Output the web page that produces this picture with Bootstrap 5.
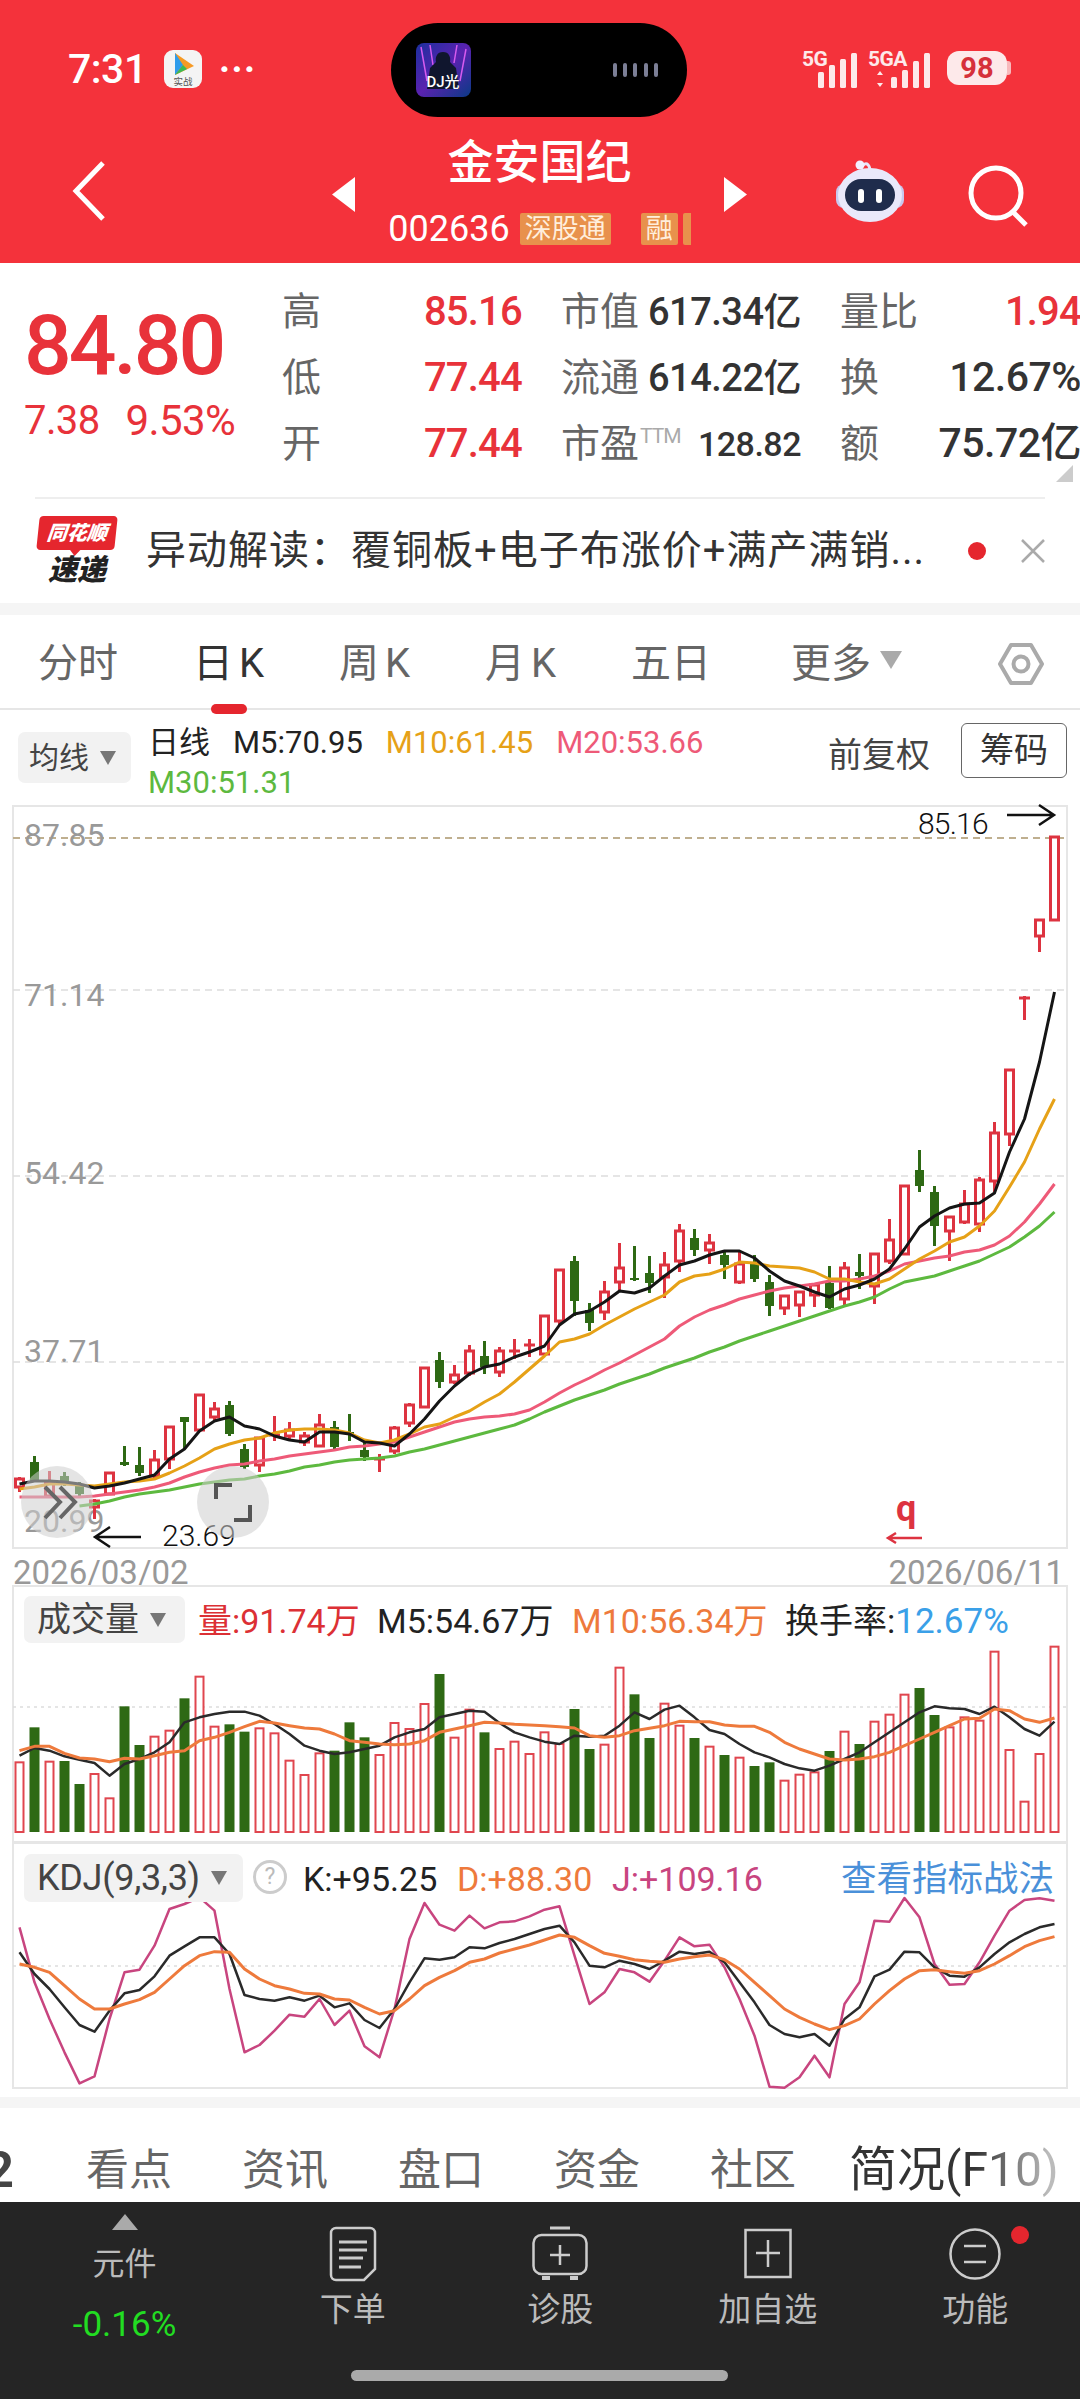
<!DOCTYPE html>
<html lang="zh-CN">
<head>
    <meta charset="UTF-8">
    <meta name="viewport" content="width=device-width, initial-scale=1.0">
    <title>金安国纪 002636</title>
    <link href="https://cdn.jsdelivr.net/npm/bootstrap@5.3.0/dist/css/bootstrap.min.css" rel="stylesheet">
    <style>
        html, body { width: 1080px; height: 2400px; overflow: hidden; }
        body { background: #fff; color: #333; font-family: Roboto, "Noto Sans CJK SC", sans-serif; }
        svg { display: block; overflow: visible; }
        svg text { font-family: Roboto, "Noto Sans CJK SC", sans-serif; }

        .top-red { height: 263px; background: #F4323B; color: #fff; }
        .status-row { height: 130px; }
        .status-left { width: 391px; padding-left: 68px; padding-top: 8px; gap: 17px; }
        .clock { font-size: 41px; font-weight: 500; letter-spacing: -.5px; line-height: 1; }
        .status-dots { font-size: 38px; line-height: 1; font-weight: 700; letter-spacing: 1px; }
        .island { width: 296px; height: 94px; margin-top: 23px; background: #000; border-radius: 47px; padding: 0 29px 0 25px; }
        .status-right { padding-left: 115px; padding-top: 6px; gap: 13px; }
        .batt { width: 60px; height: 34px; background: #FDE9EA; border-radius: 12px; color: #D6303A; font-size: 29px; font-weight: 700; line-height: 34px; text-align: center; position: relative; }
        .batt::after { content: ""; position: absolute; right: -4px; top: 10px; width: 4px; height: 14px; background: #f8b9bc; border-radius: 0 3px 3px 0; }

        .title-row { height: 133px; }
        .back-box { width: 332px; padding-left: 70px; padding-top: 30px; }
        .title-mid { width: 415px; }
        .nav-tri { margin-top: 47px; }
        .title-name { font-size: 46px; font-weight: 500; line-height: 50px; margin-top: 7px; }
        .title-code { font-size: 36px; line-height: 34px; margin-top: 25px; gap: 10px; }
        .tag-or { background: #E8914C; color: #FFEEDC; font-size: 27px; line-height: 32px; height: 32px; padding: 0 5px; border-radius: 2px; }
        .tag-sliver { width: 8px; height: 32px; background: #E8914C; border-radius: 2px 0 0 2px; margin-left: -5px; }
        .tag-gap { margin-left: 20px; }
        .title-right { padding-left: 86px; gap: 62px; }
        .robot-ico { margin-top: 30px; }
        .search-ico { margin-top: 36px; }

        .quote-box { height: 234px; position: relative; }
        .price-col { width: 282px; padding-left: 24px; color: #E8323A; }
        .price-big { font-size: 84px; font-weight: 500; letter-spacing: -3px; line-height: 90px; margin-top: 38px; }
        .price-sub { font-size: 40px; line-height: 46px; letter-spacing: -.6px; margin-top: 7px; gap: 26px; }
        .price-pct { font-size: 42px; }
        .stat-grid { display: grid; grid-template-columns: 240px 240px 241px; column-gap: 39px; grid-auto-rows: 66px; padding-top: 16px; width: 798px; }
        .stat-cell { font-size: 40px; color: #666; }
        .stat-val { font-weight: 500; color: #333; font-size: 38px; letter-spacing: -.5px; white-space: nowrap; }
        .stat-up { color: #E8323A; font-size: 40px; letter-spacing: -.8px; }
        .stat-wide { font-size: 41px; }
        .stat-pe { font-size: 34px; }
        .stat-lab { font-size: 39px; line-height: 1; white-space: nowrap; }
        .ttm { font-size: 21px; color: #aaa; vertical-align: 14px; letter-spacing: -1px; margin-left: 1px; }
        .corner-tri { position: absolute; right: 7px; bottom: 15px; width: 0; height: 0; border-left: 17px solid transparent; border-bottom: 17px solid #ccc; }
        .quote-rule { height: 2px; background: #eee; margin: 0 35px; }

        .news-row { height: 104px; padding-left: 38px; }
        .ths-logo { width: 80px; height: 70px; }
        .ths-top { background: #E5262E; color: #fff; height: 34px; border-radius: 4px; font-size: 20px; font-weight: 900; font-style: italic; line-height: 34px; text-align: center; position: relative; transform: skewX(-6deg); width: 78px; }
        .ths-top::after { content: ""; position: absolute; left: 33px; bottom: -6px; border-left: 6px solid transparent; border-right: 6px solid transparent; border-top: 7px solid #E5262E; }
        .ths-bot { font-size: 29px; font-weight: 900; font-style: italic; color: #222; line-height: 30px; text-align: center; margin-top: 5px; width: 78px; }
        .news-text { font-size: 40px; color: #333; margin-left: 28px; width: 822px; white-space: nowrap; line-height: 1; letter-spacing: 1px; }
        .news-dot { width: 18px; height: 18px; border-radius: 50%; background: #E5262E; }
        .news-close { margin-left: 35px; }
        .grey-strip { height: 12px; background: #F5F5F5; }
        .grey-strip2 { height: 11px; background: #F5F5F5; margin-top: 9px; }

        .period-row { height: 95px; border-bottom: 2px solid #e6e6e6; padding: 5px 0 0 38px; position: relative; font-size: 40px; color: #666; }
        .period-item { line-height: 1; white-space: nowrap; position: relative; width: 146px; }
        .period-first { width: 155px; }
        .period-five { width: 160px; }
        .period-more { width: 207px; }
        .period-k { margin-left: 6px; }
        .period-on { color: #333; }
        .period-on::after { content: ""; position: absolute; left: 18px; bottom: -30px; width: 36px; height: 10px; background: #E5262E; border-radius: 5px; }
        .tri-down { display: inline-block; width: 0; height: 0; border-left: 11px solid transparent; border-right: 11px solid transparent; border-top: 18px solid #aaa; margin-left: 9px; vertical-align: 8px; }

        .ma-row { height: 95px; padding: 0 13px 0 18px; }
        .pill-grey { background: #F2F2F2; border-radius: 7px; color: #444; white-space: nowrap; }
        .pill-ma { width: 113px; height: 51px; font-size: 30px; margin-top: 22px; padding-left: 11px; }
        .tri-small { display: inline-block; width: 0; height: 0; border-left: 8px solid transparent; border-right: 8px solid transparent; border-top: 14px solid #777; margin-left: 11px; }
        .ma-vals { width: 680px; margin-left: 17px; padding-top: 13px; font-size: 31px; line-height: 40px; }
        .ma-vals span { margin-right: 23px; white-space: nowrap; }
        .c-black { color: #222; } .c-m10 { color: #E6A117; } .c-m20 { color: #EE5A78; } .c-m30 { color: #5DB93F; }
        .fq-text { font-size: 34px; color: #444; margin-top: 20px; white-space: nowrap; }
        .chip-btn { width: 106px; height: 55px; border: 1px solid #666; border-radius: 6px; font-size: 34px; color: #333; margin-left: 31px; margin-top: 13px; }

        .date-row { height: 37px; padding: 6px 16px 0 13px; font-size: 33px; line-height: 37px; color: #999; }

        .panel-box { position: relative; }
        .pill-vol { height: 47px; font-size: 34px; padding: 0 14px 0 13px; width: 161px; }
        .vol-head { position: absolute; left: 24px; top: 11px; font-size: 34px; }
        .vol-head span.txt { position: absolute; top: 5px; white-space: nowrap; line-height: 40px; }
        .v-red { color: #DC3035; } .v-org { color: #EE7A3C; } .v-blue { color: #3AA0E8; font-size: 35px; } .v-mag { color: #C8457F; } .v-link { color: #4A90D9; font-size: 35.5px; }
        .t-vol1 { left: 174px; } .t-vol2 { left: 353px; } .t-vol3 { left: 548px; } .t-vol4 { left: 761px; }
        .kdj-head { position: absolute; left: 24px; top: 12px; font-size: 34px; }
        .kdj-head span.txt { position: absolute; top: 5px; white-space: nowrap; line-height: 40px; }
        .t-k { left: 279px; } .t-d { left: 433px; } .t-j { left: 588px; } .t-link { left: 817px; }
        .pill-kdj { width: 219px; height: 48px; font-size: 36px; padding-left: 13px; letter-spacing: -.3px; }
        .help-dot { width: 34px; height: 34px; border: 3px solid #ccc; border-radius: 50%; color: #bbb; font-size: 23px; position: absolute; left: 229px; top: 6px; }

        .sub-tabs { height: 94px; padding-top: 30px; font-size: 43px; color: #666; }
        .sub-cut { width: 14px; overflow: hidden; margin-right: 72px; color: #444; font-weight: 700; font-size: 50px; direction: rtl; }
        .sub-tab { width: 84px; margin-right: 72px; white-space: nowrap; }
        .sub-on { margin-left: -17px; font-size: 48px; white-space: nowrap; background: linear-gradient(90deg, #333 60%, #bbb 95%); -webkit-background-clip: text; background-clip: text; color: transparent; }

        .foot-dark { height: 197px; background: #252525; color: #bbb; position: relative; }
        .foot-first { width: 249px; font-size: 32px; }
        .foot-tri { width: 0; height: 0; border-left: 13px solid transparent; border-right: 13px solid transparent; border-bottom: 16px solid #aaa; margin-top: 12px; }
        .foot-name { line-height: 1; margin-top: 18px; }
        .foot-chg { color: #22DD22; font-size: 35px; line-height: 1; margin-top: 27px; }
        .foot-item { width: 207.5px; font-size: 33px; padding-top: 24px; position: relative; }
        .foot-ico { height: 56px; }
        .foot-lab { line-height: 1; margin-top: 11px; white-space: nowrap; }
        .foot-red { position: absolute; left: 139px; top: 24px; width: 18px; height: 18px; border-radius: 50%; background: #E5262E; }
        .home-bar { position: absolute; left: 351px; top: 168px; width: 377px; height: 11px; background: #aaa; border-radius: 6px; }
    </style>
</head>
<body>
    <!-- 顶部红色标题 -->
    <div class="top-red">
        <div class="status-row d-flex">
            <div class="status-left d-flex align-items-center">
                <span class="clock">7:31</span>
                <svg width="38" height="38" viewBox="0 0 38 38">
                    <rect width="38" height="38" rx="9" fill="#f4f4f4"/>
                    <path d="M11 3l19 13-19 9z" fill="#F79A24"/>
                    <path d="M11 3l8 12-8 10z" fill="#2E9CEB"/>
                    <path d="M11 25l8-10 4 4z" fill="#3CBA54"/>
                    <text x="19" y="35" font-size="9.5" text-anchor="middle" fill="#555">实战</text>
                </svg>
                <span class="status-dots">···</span>
            </div>
            <div class="island d-flex align-items-center justify-content-between">
                <svg width="55" height="54" viewBox="0 0 55 54">
                    <defs>
                        <linearGradient id="albumBg" x1="0" y1="0" x2="1" y2="1">
                            <stop offset="0" stop-color="#1B2F9E"/>
                            <stop offset=".5" stop-color="#5A22B0"/>
                            <stop offset="1" stop-color="#0A3A86"/>
                        </linearGradient>
                    </defs>
                    <rect width="55" height="54" rx="8" fill="url(#albumBg)"/>
                    <path d="M5 4l6 34M50 6l-6 32M14 2l3 20M41 2l-3 18" stroke="#D65BEF" stroke-width="1.5"/>
                    <path d="M27 9c6 0 8 5 7 10l6 6 3 21H11l3-21 6-6c-1-5 1-10 7-10z" fill="#10162E"/>
                    <text x="27" y="44" font-size="15" text-anchor="middle" fill="#fff" font-weight="500">DJ光</text>
                </svg>
                <svg width="45" height="14" viewBox="0 0 45 14" fill="#7C7F96">
                    <rect x="0" width="4" height="14" rx="2"/><rect x="10" width="4" height="14" rx="2"/><rect x="20" width="4" height="14" rx="2"/><rect x="31" width="4" height="14" rx="2"/><rect x="41" width="4" height="14" rx="2"/>
                </svg>
            </div>
            <div class="status-right d-flex align-items-center">
                <svg width="132" height="43" viewBox="0 -3 132 43" fill="#FDE9EA">
                    <text x="0" y="16" font-size="21" font-weight="700" letter-spacing="-.5">5G</text>
                    <rect x="16" y="22" width="6" height="16" rx="1.5"/><rect x="27" y="15" width="6" height="23" rx="1.5"/><rect x="38" y="9" width="6" height="29" rx="1.5"/><rect x="49" y="3" width="6" height="35" rx="1.5"/>
                    <text x="66" y="16" font-size="21" font-weight="700" letter-spacing="-.5">5GA</text>
                    <path d="M78 21l3 4h-6zM78 37l3-4h-6z"/>
                    <rect x="89" y="27" width="6" height="11" rx="1.5"/><rect x="100" y="20" width="6" height="18" rx="1.5"/><rect x="111" y="11" width="6" height="27" rx="1.5"/><rect x="122" y="3" width="6" height="35" rx="1.5"/>
                </svg>
                <div class="batt">98</div>
            </div>
        </div>
        <div class="title-row d-flex">
            <div class="back-box">
                <svg width="36" height="62" viewBox="0 0 36 62" fill="none" stroke="#fff" stroke-width="5">
                    <path d="M33 3L6 31l27 28"/>
                </svg>
            </div>
            <div class="title-mid d-flex align-items-start justify-content-between">
                <svg class="nav-tri" width="23" height="35" viewBox="0 0 23 35" fill="#fff"><path d="M23 0v35L0 17.5z"/></svg>
                <div class="d-flex flex-column align-items-center">
                    <div class="title-name">金安国纪</div>
                    <div class="title-code d-flex align-items-center">
                        <span>002636</span>
                        <span class="tag-or">深股通</span>
                        <span class="tag-or tag-gap">融</span>
                        <span class="tag-sliver"></span>
                    </div>
                </div>
                <svg class="nav-tri" width="23" height="35" viewBox="0 0 23 35" fill="#fff"><path d="M0 0v35l23-17.5z"/></svg>
            </div>
            <div class="title-right d-flex align-items-start">
                <svg class="robot-ico" width="74" height="64" viewBox="0 0 74 64">
                    <path d="M30 5c4-3 7 0 7 7" fill="none" stroke="#E8E6FA" stroke-width="3"/>
                    <circle cx="27" cy="5" r="4.5" fill="#F2F0FF"/>
                    <rect x="3" y="24" width="68" height="24" rx="8" fill="#C9C8EE"/>
                    <ellipse cx="37" cy="35" rx="32" ry="27" fill="#E9E8FA"/>
                    <rect x="12" y="19" width="50" height="32" rx="16" fill="#1F2C4C"/>
                    <rect x="25" y="29" width="6" height="14" rx="3" fill="#fff"/>
                    <rect x="43" y="29" width="6" height="14" rx="3" fill="#fff"/>
                </svg>
                <svg class="search-ico" width="60" height="62" viewBox="0 0 60 62" fill="none" stroke="#fff" stroke-width="5">
                    <circle cx="27" cy="27" r="25"/>
                    <path d="M44 46l13 13"/>
                </svg>
            </div>
        </div>
    </div>

    <!-- 行情 -->
    <div class="quote-box d-flex">
        <div class="price-col">
            <div class="price-big">84.80</div>
            <div class="price-sub d-flex"><span>7.38</span><span class="price-pct">9.53%</span></div>
        </div>
        <div class="stat-grid">
            <div class="stat-cell d-flex justify-content-between align-items-center"><span class="stat-lab">高</span><span class="stat-val stat-up">85.16</span></div>
            <div class="stat-cell d-flex justify-content-between align-items-center"><span class="stat-lab">市值</span><span class="stat-val">617.34亿</span></div>
            <div class="stat-cell d-flex justify-content-between align-items-center"><span class="stat-lab">量比</span><span class="stat-val stat-up">1.94</span></div>
            <div class="stat-cell d-flex justify-content-between align-items-center"><span class="stat-lab">低</span><span class="stat-val stat-up">77.44</span></div>
            <div class="stat-cell d-flex justify-content-between align-items-center"><span class="stat-lab">流通</span><span class="stat-val">614.22亿</span></div>
            <div class="stat-cell d-flex justify-content-between align-items-center"><span class="stat-lab">换</span><span class="stat-val stat-wide">12.67%</span></div>
            <div class="stat-cell d-flex justify-content-between align-items-center"><span class="stat-lab">开</span><span class="stat-val stat-up">77.44</span></div>
            <div class="stat-cell d-flex justify-content-between align-items-center"><span class="stat-lab">市盈<span class="ttm">TTM</span></span><span class="stat-val stat-pe">128.82</span></div>
            <div class="stat-cell d-flex justify-content-between align-items-center"><span class="stat-lab">额</span><span class="stat-val stat-wide">75.72亿</span></div>
        </div>
        <div class="corner-tri"></div>
    </div>
    <div class="quote-rule"></div>

    <!-- 异动解读 -->
    <div class="news-row d-flex align-items-center">
        <div class="ths-logo">
            <div class="ths-top">同花顺</div>
            <div class="ths-bot">速递</div>
        </div>
        <div class="news-text">异动解读：覆铜板+电子布涨价+满产满销...</div>
        <div class="news-dot"></div>
        <svg class="news-close" width="24" height="24" viewBox="0 0 24 24" stroke="#aaa" stroke-width="2.5"><path d="M1 1l22 22M23 1L1 23"/></svg>
    </div>
    <div class="grey-strip"></div>

    <!-- 周期切换 -->
    <div class="period-row d-flex align-items-center">
        <span class="period-item period-first">分时</span>
        <span class="period-item period-on">日<span class="period-k">K</span></span>
        <span class="period-item">周<span class="period-k">K</span></span>
        <span class="period-item">月<span class="period-k">K</span></span>
        <span class="period-item period-five">五日</span>
        <span class="period-item period-more">更多<i class="tri-down"></i></span>
        <svg width="46" height="44" viewBox="0 0 46 44" fill="none" stroke="#aaa" stroke-width="4" stroke-linejoin="round">
            <path d="M13 3h20l11 19-11 19H13L2 22z"/>
            <circle cx="23" cy="22" r="7.5"/>
        </svg>
    </div>

    <!-- 均线 -->
    <div class="ma-row d-flex">
        <div class="pill-grey pill-ma d-flex align-items-center">均线<i class="tri-small"></i></div>
        <div class="ma-vals">
            <span class="c-black">日线</span><span class="c-black">M5:70.95</span><span class="c-m10">M10:61.45</span><span class="c-m20">M20:53.66</span><br>
            <span class="c-m30">M30:51.31</span>
        </div>
        <div class="fq-text">前复权</div>
        <div class="chip-btn d-flex align-items-center justify-content-center">筹码</div>
    </div>

    <!-- K线图 -->
    <svg id="klineSvg" width="1080" height="743" viewBox="0 806 1080 743"></svg>
    <div class="date-row d-flex justify-content-between"><span>2026/03/02</span><span>2026/06/11</span></div>

    <!-- 成交量 -->
    <div class="panel-box">
        <svg id="volSvg" width="1080" height="257" viewBox="0 1586 1080 257"></svg>
        <div class="vol-head">
            <div class="pill-grey pill-vol d-flex align-items-center">成交量<i class="tri-small"></i></div>
            <span class="txt v-red t-vol1">量:91.74万</span>
            <span class="txt c-black t-vol2">M5:54.67万</span>
            <span class="txt v-org t-vol3">M10:56.34万</span>
            <span class="txt c-black t-vol4">换手率:<span class="v-blue">12.67%</span></span>
        </div>
    </div>

    <!-- KDJ -->
    <div class="panel-box">
        <svg id="kdjSvg" width="1080" height="246" viewBox="0 1843 1080 246"></svg>
        <div class="kdj-head">
            <div class="pill-grey pill-kdj d-flex align-items-center">KDJ(9,3,3)<i class="tri-small"></i></div>
            <div class="help-dot d-flex align-items-center justify-content-center">?</div>
            <span class="txt c-black t-k">K:+95.25</span>
            <span class="txt v-org t-d">D:+88.30</span>
            <span class="txt v-mag t-j">J:+109.16</span>
            <span class="txt v-link t-link">查看指标战法</span>
        </div>
    </div>

    <div class="grey-strip2"></div>

    <!-- 资讯切换 -->
    <div class="sub-tabs d-flex align-items-center">
        <span class="sub-cut">2</span>
        <span class="sub-tab">看点</span>
        <span class="sub-tab">资讯</span>
        <span class="sub-tab">盘口</span>
        <span class="sub-tab">资金</span>
        <span class="sub-tab">社区</span>
        <span class="sub-on">简况(F10)</span>
    </div>

    <!-- 底部 -->
    <div class="foot-dark d-flex">
        <div class="foot-first d-flex flex-column align-items-center">
            <div class="foot-tri"></div>
            <div class="foot-name">元件</div>
            <div class="foot-chg">-0.16%</div>
        </div>
        <div class="foot-item d-flex flex-column align-items-center">
            <svg class="foot-ico" width="48" height="56" viewBox="0 0 48 56" fill="none" stroke="#ccc" stroke-width="2.5">
                <path d="M7 2h34a5 5 0 0 1 5 5v36l-11 11H7a5 5 0 0 1-5-5V7a5 5 0 0 1 5-5z"/>
                <path d="M10 16h28M10 24h28M10 32h24M10 41h22" stroke-width="3"/>
            </svg>
            <div class="foot-lab">下单</div>
        </div>
        <div class="foot-item d-flex flex-column align-items-center">
            <svg class="foot-ico" width="56" height="56" viewBox="0 0 56 56" fill="none" stroke="#ccc" stroke-width="2.5">
                <path d="M18 2h20" stroke-width="3"/>
                <rect x="1.5" y="9" width="53" height="39" rx="8"/>
                <path d="M28 19v20M18 29h20"/>
                <path d="M10 52h8M38 52h8" stroke-width="4"/>
            </svg>
            <div class="foot-lab">诊股</div>
        </div>
        <div class="foot-item d-flex flex-column align-items-center">
            <svg class="foot-ico" width="48" height="56" viewBox="0 0 48 56" fill="none" stroke="#ccc" stroke-width="2.5">
                <rect x="1.5" y="4" width="45" height="47"/>
                <path d="M24 14v27M12 27h24"/>
            </svg>
            <div class="foot-lab">加自选</div>
        </div>
        <div class="foot-item d-flex flex-column align-items-center">
            <svg class="foot-ico" width="52" height="56" viewBox="0 0 52 56" fill="none" stroke="#ccc" stroke-width="2.5">
                <circle cx="26" cy="28" r="24.5"/>
                <path d="M15 20h22M15 36h22"/>
            </svg>
            <div class="foot-lab">功能</div>
            <div class="foot-red"></div>
        </div>
        <div class="home-bar"></div>
    </div>

    <script src="https://cdn.jsdelivr.net/npm/bootstrap@5.3.0/dist/js/bootstrap.bundle.min.js"></script>
    <script>
        // 数据都是按截图量出来的像素坐标
        const RED = '#DD3340', GREEN = '#2E6914';
        const X = i => 19.5 + 15 * i;

        const candles = [
            [1478,1480,1488,1493],[1457,1463,1482,1483],[1472,1483,1497,1499],[1473,1477,1485,1487],[1483,1487,1495,1497],
            [1500,1502,1508,1520],[1474,1474,1495,1495],[1447,1463,1466,1467],[1448,1466,1474,1477],[1451,1461,1477,1480],
            [1428,1428,1460,1470],[1418,1418,1423,1450],[1395,1396,1431,1433],[1403,1410,1418,1423],[1402,1406,1435,1437],
            [1445,1450,1468,1470],[1439,1439,1466,1473],[1417,1435,1437,1442],[1423,1431,1437,1440],[1433,1437,1443,1447],
            [1415,1426,1447,1447],[1422,1428,1448,1450],[1415,1433,1434,1442],[1442,1451,1458,1462],[1455,1459,1460,1473],
            [1427,1429,1452,1455],[1404,1406,1424,1428],[1369,1369,1408,1408],[1353,1361,1383,1389],[1366,1376,1383,1385],
            [1346,1352,1374,1377],[1342,1357,1368,1375],[1348,1352,1373,1378],[1340,1351,1352,1360],[1340,1345,1346,1358],
            [1317,1317,1355,1357],[1270,1271,1322,1326],[1257,1262,1302,1317],[1304,1311,1324,1332],[1282,1293,1313,1321],
            [1244,1269,1283,1292],[1247,1279,1281,1282],[1257,1274,1284,1294],[1253,1266,1278,1299],[1225,1232,1262,1273],
            [1230,1239,1251,1257],[1235,1244,1251,1265],[1252,1256,1266,1280],[1252,1265,1283,1285],[1256,1265,1280,1283],
            [1276,1283,1307,1317],[1297,1297,1309,1316],[1293,1293,1306,1318],[1285,1286,1296,1308],[1267,1284,1309,1310],
            [1263,1269,1300,1308],[1255,1273,1277,1290],[1255,1255,1287,1305],[1220,1241,1262,1265],[1187,1187,1255,1255],
            [1151,1171,1187,1193],[1187,1193,1227,1247],[1218,1218,1232,1262],[1191,1205,1223,1225],[1178,1181,1225,1233],
            [1123,1134,1182,1193],[1071,1071,1135,1147],[997,998,999,1021],[921,921,937,953],[837,838,921,921]
        ];
        const greens = [1,3,4,7,8,11,14,15,21,22,23,28,31,37,38,41,42,45,47,49,50,54,56,60,61];

        const ma5 = [1485,1482,1482,1483,1485,1489,1487,1484,1480,1476,1460,1450,1432,1422,1418,1427,1430,1437,1441,1443,1433,1433,1435,1443,1444,1447,1435,1420,1402,1387,1375,1368,1365,1358,1353,1347,1326,1315,1312,1303,1292,1294,1289,1277,1266,1262,1256,1252,1252,1259,1272,1282,1287,1293,1298,1290,1286,1280,1270,1250,1228,1217,1209,1205,1204,1194,1153,1120,1063,993];
        const ma10 = [1490,1488,1485,1485,1486,1487,1485,1483,1482,1480,1474,1467,1459,1450,1445,1441,1439,1434,1431,1430,1430,1431,1434,1441,1444,1441,1435,1428,1425,1418,1412,1403,1395,1383,1370,1357,1343,1340,1335,1326,1318,1310,1303,1296,1283,1277,1275,1270,1263,1264,1267,1268,1269,1273,1280,1280,1283,1285,1280,1270,1260,1252,1243,1238,1227,1212,1188,1163,1130,1100];
        const ma20 = [1498,1498,1498,1498,1498,1497,1495,1493,1491,1488,1484,1478,1473,1469,1466,1465,1462,1460,1457,1455,1453,1451,1448,1447,1445,1443,1438,1433,1428,1423,1420,1418,1417,1415,1411,1403,1394,1386,1379,1371,1364,1356,1348,1340,1327,1318,1311,1306,1300,1296,1292,1289,1287,1285,1282,1282,1280,1277,1272,1265,1262,1259,1257,1253,1251,1246,1237,1223,1205,1185];
        const ma30 = [null,null,null,null,1507,1505,1502,1498,1495,1493,1491,1488,1485,1483,1481,1480,1477,1475,1472,1468,1466,1463,1461,1460,1459,1457,1453,1450,1446,1442,1438,1434,1430,1426,1420,1413,1407,1401,1396,1391,1385,1380,1375,1369,1364,1359,1353,1348,1342,1337,1332,1327,1322,1317,1312,1307,1303,1298,1290,1283,1280,1277,1272,1267,1262,1255,1248,1238,1227,1213];

        // 成交量，量出来的值在放大图里，y = 1570 + v / 3
        const vols = [580,475,578,576,645,615,688,412,528,503,485,388,323,473,466,488,478,493,575,618,553,545,460,505,558,462,480,405,315,506,422,490,540,518,555,490,525,420,540,527,296,376,507,404,470,507,533,558,566,591,580,635,617,610,546,488,525,458,437,377,357,438,475,445,455,248,543,698,555,233];
        const volBlack = [560,537,545,562,572,582,620,585,570,550,520,460,445,435,428,428,440,465,495,530,545,555,550,540,530,505,490,480,445,435,425,428,462,490,505,518,525,500,503,500,470,430,450,422,410,445,483,495,525,550,565,585,598,605,590,570,550,520,490,460,430,412,418,420,435,413,445,480,500,458];
        const volOrange = [545,532,532,553,567,570,578,568,570,560,550,545,515,505,490,473,457,462,470,477,480,495,515,520,525,527,525,515,490,480,470,460,462,466,468,470,473,477,500,505,500,485,478,470,457,458,458,468,472,472,490,520,540,555,570,573,570,563,550,530,510,490,470,450,448,420,425,450,460,447];

        // KDJ，y = 1840 + v / 3
        const kdjK = [340,405,450,505,558,578,515,463,453,412,350,322,295,295,345,468,480,485,475,485,470,505,493,543,567,510,430,358,362,355,325,328,312,300,285,270,260,310,380,385,365,375,390,365,338,345,338,370,430,490,558,585,595,585,620,540,505,412,392,338,340,385,410,413,385,345,310,285,265,255];
        const kdjD = [375,385,400,440,480,510,510,495,482,460,420,380,350,338,340,390,420,440,450,463,465,480,483,505,525,515,480,440,415,395,370,360,342,330,318,303,288,295,320,343,352,362,367,370,360,353,348,362,390,430,470,510,535,555,572,560,540,495,455,420,395,392,398,403,395,375,350,323,305,293];
        const kdjJ = [265,430,540,640,733,712,540,400,392,320,210,195,175,215,450,640,618,575,527,533,480,558,515,622,655,510,300,192,257,275,230,268,250,247,232,212,202,350,495,460,390,400,428,365,295,322,317,385,480,590,743,746,715,650,715,495,430,245,248,177,235,375,437,435,370,290,215,183,178,185];

        function linePath(ys, map) {
            let d = '';
            ys.forEach((y, i) => {
                if (y === null) return;
                d += (d ? 'L' : 'M') + X(i) + ' ' + (map ? map(y) : y);
            });
            return d;
        }

        function poly(ys, color, width, map) {
            return `<path d="${linePath(ys, map)}" fill="none" stroke="${color}" stroke-width="${width}" stroke-linejoin="round"/>`;
        }

        function frame(y1, y2) {
            return `<path d="M13 ${y1}H1067V${y2}H13Z" fill="none" stroke="#E6E6E6" stroke-width="2"/>`;
        }

        function label(x, y, txt, size, color, extra) {
            return `<text x="${x}" y="${y}" font-size="${size}" fill="${color}" ${extra || ''}>${txt}</text>`;
        }

        // K线
        let k = frame(807, 1549);
        [991, 1177, 1363].forEach(y => {
            k += `<path d="M13 ${y}H1067" stroke="#DDD" stroke-width="1.5" stroke-dasharray="7 5"/>`;
        });
        k += `<path d="M13 839H1067" stroke="#BFAF8F" stroke-width="2" stroke-dasharray="7 5"/>`;
        [['87.85', 847], ['71.14', 1007], ['54.42', 1185], ['37.71', 1363], ['20.99', 1533]].forEach(a => {
            k += label(24, a[1], a[0], 32, '#999');
        });
        candles.forEach((c, i) => {
            const x = X(i), isG = greens.includes(i), col = isG ? GREEN : RED;
            k += `<path d="M${x} ${c[0]}V${c[3]}" stroke="${col}" stroke-width="3"/>`;
            if (isG) {
                k += `<rect x="${x - 4.5}" y="${c[1]}" width="9" height="${Math.max(c[2] - c[1], 2)}" fill="${col}"/>`;
            } else if (c[2] - c[1] > 3) {
                k += `<rect x="${x - 4}" y="${c[1]}" width="8" height="${c[2] - c[1]}" fill="#fff" stroke="${col}" stroke-width="3"/>`;
            } else {
                k += `<path d="M${x - 5.5} ${c[1] + 1}H${x + 5.5}" stroke="${col}" stroke-width="3"/>`;
            }
        });
        k += poly(ma30, '#5DB93F', 3);
        k += poly(ma20, '#EE5A78', 3);
        k += poly(ma10, '#E6A117', 3);
        k += poly(ma5, '#151515', 3);
        k += label(918, 835, '85.16', 30, '#111', 'font-weight="300" letter-spacing="-.8"');
        k += `<path d="M1007 816H1054M1039 806l15 10-15 10" fill="none" stroke="#111" stroke-width="2.5"/>`;
        k += label(162, 1547, '23.69', 30, '#111', 'font-weight="300"');
        k += `<path d="M95 1538H141M110 1528l-15 10 15 10" fill="none" stroke="#111" stroke-width="2.5"/>`;
        k += label(896, 1522, 'q', 36, '#DD3340', 'font-weight="700"');
        k += `<path d="M888 1539H922M896 1534l-8 5 8 5" fill="none" stroke="#DD3340" stroke-width="2.5"/>`;
        // 左下两个浮动按钮
        k += `<circle cx="57" cy="1503" r="36" fill="rgba(205,205,205,.55)"/>`;
        k += `<path d="M45 1488l15 15-15 16M60 1488l15 15-15 16" fill="none" stroke="#666" stroke-width="4"/>`;
        k += `<circle cx="233" cy="1503" r="36" fill="rgba(205,205,205,.55)"/>`;
        k += `<path d="M232 1486H216V1500M234 1521H250V1506" fill="none" stroke="#555" stroke-width="4"/>`;
        document.getElementById('klineSvg').innerHTML = k;

        // 成交量
        const vy = v => 1570 + v / 3;
        let v = frame(1587, 1843);
        v += `<path d="M13 1708H1067" stroke="#DDD" stroke-width="1.5" stroke-dasharray="3 4"/>`;
        vols.forEach((h, i) => {
            const x = X(i), top = vy(h);
            if (greens.includes(i)) {
                v += `<rect x="${x - 5}" y="${top}" width="10" height="${1833 - top}" fill="${GREEN}"/>`;
            } else {
                v += `<rect x="${x - 4}" y="${top}" width="8" height="${1833 - top}" fill="#fff" stroke="#E0464F" stroke-width="2"/>`;
            }
        });
        v += poly(volBlack, '#2A2A2A', 2.5, vy);
        v += poly(volOrange, '#EE7A3C', 3, vy);
        document.getElementById('volSvg').innerHTML = v;

        // KDJ
        const ky = n => 1840 + n / 3;
        let d = frame(1844, 2089);
        d += `<path d="M13 1967H1067" stroke="#DDD" stroke-width="1.5" stroke-dasharray="3 4"/>`;
        d += poly(kdjJ, '#C8457F', 2.5, ky);
        d += poly(kdjK, '#2A2A2A', 2.5, ky);
        d += poly(kdjD, '#EE7A3C', 3, ky);
        document.getElementById('kdjSvg').innerHTML = d;
    </script>
</body>
</html>
